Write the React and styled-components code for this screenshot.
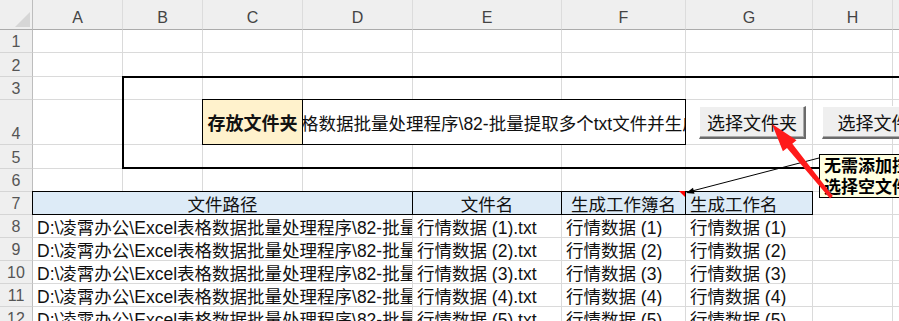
import React from 'react';
import styled, { createGlobalStyle } from 'styled-components';

const GlobalStyle = createGlobalStyle`
  html, body {
    margin: 0;
    padding: 0;
    background: #ffffff;
  }
  body {
    font-family: "Liberation Sans", "Noto Sans CJK SC", sans-serif;
  }
`;

// sheet geometry, taken from the screenshot
const COLS = ['A', 'B', 'C', 'D', 'E', 'F', 'G', 'H', 'I'];
const COL_WIDTHS = [90, 80, 100, 110, 149, 124, 127, 80];
const ROW_HEIGHTS = [23, 24, 23, 45, 24, 23, 23, 23, 23, 23, 23, 23];
const GRID = '#dadada';

const Sheet = styled.div`
  position: relative;
  display: grid;
  grid-template-columns: 33px ${COL_WIDTHS.map((w) => `${w}px`).join(' ')} 1fr;
  grid-template-rows: 30px ${ROW_HEIGHTS.map((h) => `${h}px`).join(' ')};
  width: 899px;
  height: 321px;
  overflow: hidden;
  font-size: 17.5px;
  color: #111;
`;

const Corner = styled.div`
  grid-row: 1;
  grid-column: 1;
  position: relative;
  background: #efefef;
  border-right: 1px solid #bdbdbd;
  border-bottom: 1px solid #ababab;
  box-sizing: border-box;

  &::after {
    content: '';
    position: absolute;
    right: 2px;
    bottom: 2px;
    border-left: 15px solid transparent;
    border-bottom: 15px solid #d6d6d6;
  }
`;

const ColHead = styled.div`
  grid-row: 1;
  grid-column: ${(p) => p.$c + 2};
  display: flex;
  align-items: flex-end;
  justify-content: center;
  padding-bottom: 2px;
  background: #efefef;
  border-right: 1px solid #dcdcdc;
  border-bottom: 1px solid #ababab;
  box-sizing: border-box;
  font-size: 16px;
  color: #444;
`;

const RowHead = styled.div`
  grid-row: ${(p) => p.$r + 1};
  grid-column: 1;
  display: flex;
  align-items: flex-end;
  justify-content: center;
  padding-bottom: 1px;
  background: #efefef;
  border-right: 1px solid #bdbdbd;
  border-bottom: 1px solid #d5d5d5;
  box-sizing: border-box;
  font-size: 16px;
  color: #555;
`;

const Cell = styled.div`
  grid-row: ${(p) => p.$r + 1};
  grid-column: ${(p) => `${p.$c + 2} / span ${p.$span || 1}`};
  display: flex;
  align-items: center;
  justify-content: ${(p) => (p.$align === 'center' ? 'center' : 'flex-start')};
  padding: 1px 4px 0;
  border-right: 1px solid ${GRID};
  border-bottom: 1px solid ${GRID};
  box-sizing: border-box;
  white-space: nowrap;
  overflow: hidden;
  min-width: 0;
`;

const LabelCell = styled(Cell)`
  margin: -1px 0 0 -1px;
  border: 1px solid #000;
  background: #fff2cc;
  font-size: 18px;
  font-weight: bold;
  justify-content: center;
  padding: 0;
`;

const BoxCell = styled(Cell)`
  margin: -1px 0 0 -1px;
  border: 1px solid #000;
  background: #ffffff;
  justify-content: center;
  padding: 0;
`;

const HeadCell = styled(Cell)`
  position: relative;
  overflow: visible;
  margin: -1px 0 0 -1px;
  border: 1px solid #000;
  background: #ddebf7;
  padding: 0 4px;

  &::after {
    content: '';
    display: ${(p) => (p.$note ? 'block' : 'none')};
    position: absolute;
    top: -1px;
    right: -1px;
    border-left: 7px solid transparent;
    border-top: 7px solid #ff0000;
  }
`;

// thick outline round B3 to the right edge
const Frame = styled.div`
  grid-row: 4 / 7;
  grid-column: 3 / -1;
  margin: -1px 0 0 -1px;
  border-top: 2px solid #000;
  border-left: 2px solid #000;
  border-bottom: 2px solid #000;
  pointer-events: none;
  z-index: 1;
`;

const SheetButton = styled.button`
  grid-row: 5;
  grid-column: ${(p) => `${p.$c + 2} / span 2`};
  align-self: start;
  justify-self: start;
  margin: 6px 0 0 ${(p) => p.$left}px;
  width: ${(p) => p.$width}px;
  height: 33px;
  padding: 0;
  background: #efefef;
  border-top: 1px solid #ffffff;
  border-left: 1px solid #ffffff;
  border-right: 2px solid #6b6b6b;
  border-bottom: 2px solid #6b6b6b;
  box-shadow: inset -1px -1px 0 #a9a9a9;
  font-family: "Liberation Sans", "Noto Sans CJK SC", sans-serif;
  font-size: 18px;
  color: #111;
  white-space: nowrap;
  overflow: hidden;
  z-index: 2;
`;

const Comment = styled.div`
  position: absolute;
  left: 819px;
  top: 154px;
  width: 170px;
  height: 44px;
  box-sizing: border-box;
  padding: 1px 0 0 4px;
  background: #ffffe1;
  border: 1px solid #000;
  font-size: 17px;
  font-weight: bold;
  line-height: 21px;
  color: #000;
  white-space: nowrap;
  z-index: 3;
`;

const Overlay = styled.svg`
  position: absolute;
  left: 0;
  top: 0;
  pointer-events: none;
  z-index: 4;
`;

const PATH = 'D:\\凌霄办公\\Excel表格数据批量处理程序\\82-批量提取多个txt文件并生成工作簿';

const blanks = (r, from, to) =>
  COLS.slice(from, to).map((_, i) => <Cell key={`${r}-${from + i}`} $r={r} $c={from + i} />);

export default function App() {
  const rows = [1, 2, 3, 4, 5, 6, 7, 8, 9, 10, 11, 12];
  const data = [1, 2, 3, 4, 5];

  return (
    <>
      <GlobalStyle />
      <Sheet>
        <Corner />
        {COLS.map((c, i) => (
          <ColHead key={c} $c={i}>{c}</ColHead>
        ))}
        {rows.map((r) => (
          <RowHead key={r} $r={r}>{r}</RowHead>
        ))}

        {blanks(1, 0, 9)}
        {blanks(2, 0, 9)}
        {blanks(3, 0, 9)}

        {blanks(4, 0, 2)}
        <LabelCell $r={4} $c={2}>存放文件夹</LabelCell>
        <BoxCell $r={4} $c={3} $span={3}>{`${PATH}\\数据文件夹`}</BoxCell>
        {blanks(4, 6, 9)}

        {blanks(5, 0, 9)}
        {blanks(6, 0, 9)}

        <HeadCell $r={7} $c={0} $span={4} $align="center">文件路径</HeadCell>
        <HeadCell $r={7} $c={4} $align="center">文件名</HeadCell>
        <HeadCell $r={7} $c={5} $align="center" $note>生成工作簿名</HeadCell>
        <HeadCell $r={7} $c={6}>生成工作名</HeadCell>
        {blanks(7, 7, 9)}

        {data.map((n) => (
          <React.Fragment key={n}>
            <Cell $r={7 + n} $c={0} $span={4}>{`${PATH}\\行情数据 (${n}).txt`}</Cell>
            <Cell $r={7 + n} $c={4}>{`行情数据 (${n}).txt`}</Cell>
            <Cell $r={7 + n} $c={5}>{`行情数据 (${n})`}</Cell>
            <Cell $r={7 + n} $c={6}>{`行情数据 (${n})`}</Cell>
            {blanks(7 + n, 7, 9)}
          </React.Fragment>
        ))}

        <Frame />
        <SheetButton $c={6} $left={13} $width={107}>选择文件夹</SheetButton>
        <SheetButton $c={7} $left={9} $width={122}>选择文件夹</SheetButton>

        <Comment>
          无需添加控件，直接
          <br />
          选择空文件夹即可
        </Comment>

        <Overlay width="899" height="321" viewBox="0 0 899 321">
          <line x1="819" y1="158" x2="692" y2="191" stroke="#000" strokeWidth="1" />
          <polygon points="686,193 694.5,193.8 693,187.8" fill="#000" />
          <polygon
            points="772,124 796.5,140.3 792.3,143.7 832.8,196.1 830,198.4 787,148 782.9,151.3"
            fill="#ff1a1a"
          />
        </Overlay>
      </Sheet>
    </>
  );
}
